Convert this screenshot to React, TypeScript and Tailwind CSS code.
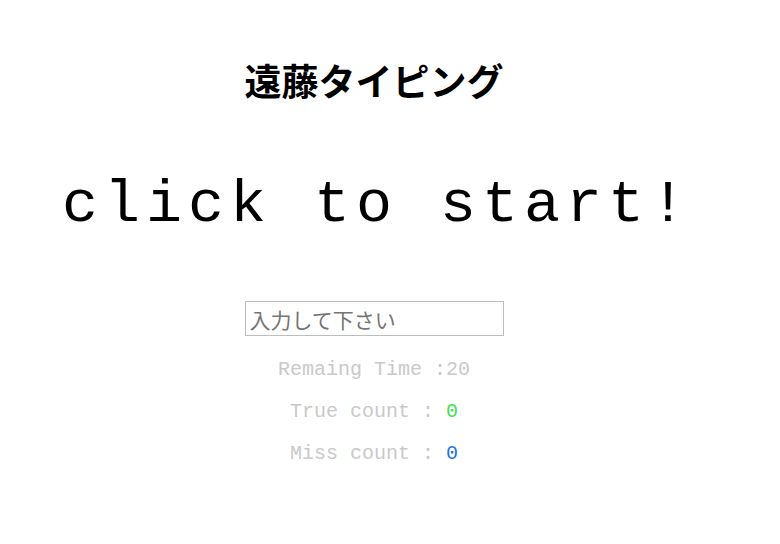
import { useState } from 'react';

export default function App() {
  const [value, setValue] = useState('');
  const remaining = 20;
  const trueCount = 0;
  const missCount = 0;

  return (
    <div className="min-h-[544px] w-[780px] bg-white">
      <div className="flex w-[748px] flex-col items-center">
        <h1 className="mt-[57px] h-[46px] text-[37px] font-bold leading-[46px] text-black [font-family:'Noto_Sans_CJK_JP',sans-serif]">
          遠藤タイピング
        </h1>

        <p className="mt-[72px] h-[60px] whitespace-pre pl-[0.1em] text-[60px] leading-[60px] tracking-[0.1em] text-black [font-family:'Liberation_Mono',monospace]">
          click to start!
        </p>

        <input
          type="text"
          value={value}
          onChange={(e) => setValue(e.target.value)}
          placeholder="入力して下さい"
          className="mt-[66px] h-[35px] w-[259px] border border-[#bdbdbd] px-[4px] text-[21px] text-black outline-none placeholder:text-[#757575] [font-family:'Noto_Sans_CJK_JP',sans-serif]"
        />

        <div className="mt-[13px] flex flex-col items-center text-[20px] leading-[42px] text-[#c9c9c9] [font-family:'Liberation_Mono',monospace]">
          <p className="whitespace-pre">Remaing Time :{remaining}</p>
          <p className="whitespace-pre">
            True count : <span className="text-[#3fdf4f]">{trueCount}</span>
          </p>
          <p className="whitespace-pre">
            Miss count : <span className="text-[#1f6fe5]">{missCount}</span>
          </p>
        </div>
      </div>
    </div>
  );
}
